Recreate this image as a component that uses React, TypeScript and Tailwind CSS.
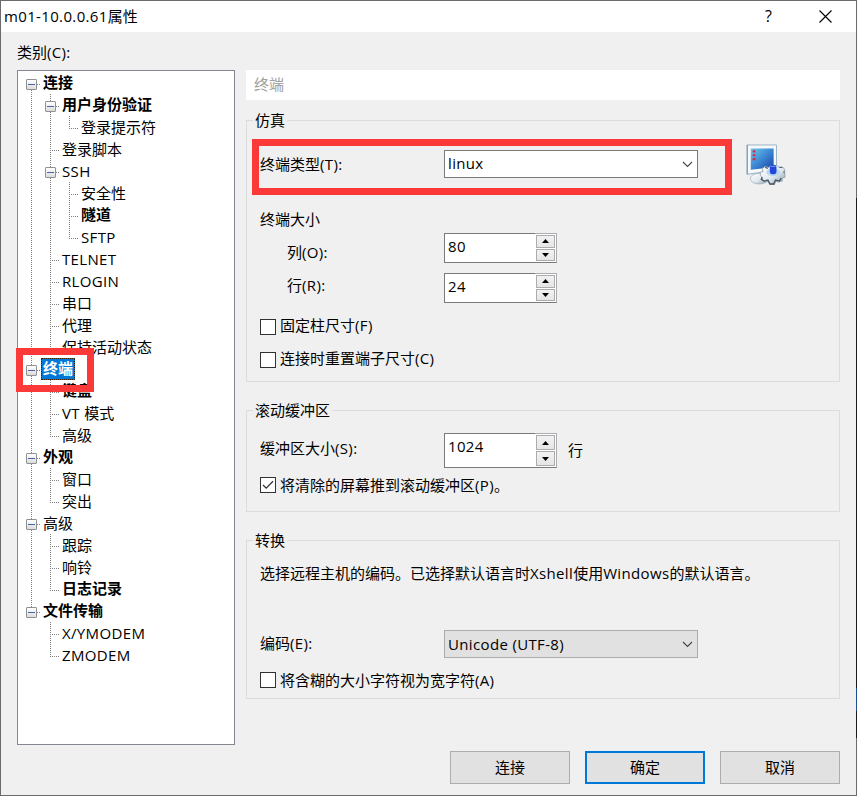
import clsx from "clsx";
import React from "react";

type Guide = "none" | "line" | "tee" | "corner";

interface TreeNode {
    label: string;
    bold?: boolean;
    selected?: boolean;
    children?: TreeNode[];
}

interface TreeRow {
    node: TreeNode;
    guides: Guide[];
    first: boolean;
}

const categories: TreeNode[] = [
    {
        label: "连接",
        bold: true,
        children: [
            { label: "用户身份验证", bold: true, children: [{ label: "登录提示符" }] },
            { label: "登录脚本" },
            {
                label: "SSH",
                children: [{ label: "安全性" }, { label: "隧道", bold: true }, { label: "SFTP" }],
            },
            { label: "TELNET" },
            { label: "RLOGIN" },
            { label: "串口" },
            { label: "代理" },
            { label: "保持活动状态" },
        ],
    },
    {
        label: "终端",
        bold: true,
        selected: true,
        children: [{ label: "键盘", bold: true }, { label: "VT 模式" }, { label: "高级" }],
    },
    { label: "外观", bold: true, children: [{ label: "窗口" }, { label: "突出" }] },
    {
        label: "高级",
        children: [{ label: "跟踪" }, { label: "响铃" }, { label: "日志记录", bold: true }],
    },
    { label: "文件传输", bold: true, children: [{ label: "X/YMODEM" }, { label: "ZMODEM" }] },
];

const flatten = (nodes: TreeNode[], parents: Guide[] = []): TreeRow[] =>
    nodes.flatMap((node, i) => {
        const last = i === nodes.length - 1;
        return [
            {
                node,
                guides: [...parents, last ? "corner" : "tee"] as Guide[],
                first: i === 0 && parents.length === 0,
            },
            ...flatten(node.children ?? [], [...parents, last ? "none" : "line"]),
        ];
    });

// Latin runs are set a little wider than the Chinese around them
const Text = ({ children }: { children: string }) => (
    <>
        {children.split(/([\x20-\x7e]+)/).map((part, i) =>
            i % 2 ? (
                <span key={i} className="whitespace-pre tracking-[0.35px]">
                    {part}
                </span>
            ) : (
                part
            )
        )}
    </>
);

const GuideCell = ({ guide, expandable, first }: { guide: Guide; expandable: boolean; first: boolean }) => (
    <span className="relative block h-[22px] w-[19px] shrink-0">
        {guide !== "none" && (
            <span
                className={clsx(
                    "absolute left-[9px] w-px bg-[repeating-linear-gradient(to_bottom,#808080_0_1px,transparent_1px_2px)]",
                    first ? "top-3" : "top-0",
                    guide === "corner" ? "h-3" : "bottom-0"
                )}
            />
        )}
        {(guide === "tee" || guide === "corner") && (
            <span className="absolute left-[9px] right-[1px] top-3 h-px bg-[repeating-linear-gradient(to_right,#808080_0_1px,transparent_1px_2px)]" />
        )}
        {expandable && (
            <span className="absolute left-1 top-[7px] flex h-[11px] w-[11px] items-center justify-center rounded-[1px] border border-[#919191] bg-linear-to-b from-white to-[#dcdcdc]">
                <span className="h-px w-[7px] bg-[#4b63a7]" />
            </span>
        )}
    </span>
);

const CategoryTree = () => (
    <div className="h-[675px] w-[218px] border border-[#828790] bg-white pl-1 pt-px">
        {flatten(categories).map(({ node, guides, first }, row) => (
            <div key={row} className="flex h-[22px]">
                {guides.map((guide, i) => (
                    <GuideCell
                        key={i}
                        guide={guide}
                        first={first}
                        expandable={!!node.children && i === guides.length - 1}
                    />
                ))}
                <span
                    className={clsx(
                        "relative px-0.5",
                        node.bold ? "font-bold leading-5" : "leading-[22px]",
                        node.selected && "bg-[#0078d7] text-white outline-1 -outline-offset-1 outline-dotted outline-[#402000]"
                    )}
                >
                    <Text>{node.label}</Text>
                    {node.selected && (
                        <span className="absolute -left-[25px] -top-[10px] z-10 h-11 w-[78px] border-[7px] border-[#fc3939]" />
                    )}
                </span>
            </div>
        ))}
    </div>
);

const Group = ({ title, className, children }: { title: string; className: string; children: React.ReactNode }) => (
    <section className={clsx("relative border border-[#dcdcdc] px-[13px]", className)}>
        <h2 className="absolute -top-[11px] left-1.5 bg-[#f0f0f0] px-0.5">{title}</h2>
        {children}
    </section>
);

const Select = ({ value, gray }: { value: string; gray?: boolean }) => (
    <div
        className={clsx(
            "flex h-7 w-[254px] items-center justify-between border pl-[3px] pr-1",
            gray ? "border-[#adadad] bg-[#e1e1e1]" : "border-[#7a7a7a] bg-white"
        )}
    >
        <span className={clsx(!gray && "-mt-0.5")}>
            <Text>{value}</Text>
        </span>
        <svg width="11" height="7" viewBox="0 0 11 7" fill="none" stroke="#444" strokeWidth="1.1">
            <path d="M1 1l4.5 4.5L10 1" />
        </svg>
    </div>
);

const SpinButton = ({ down }: { down?: boolean }) => (
    <span className="flex flex-1 items-center justify-center border border-[#acacac] bg-linear-to-b from-[#f2f2f2] to-[#e6e6e6]">
        <svg width="7" height="4" viewBox="0 0 7 4" className={clsx(down && "rotate-180")}>
            <path d="M3.5 0L7 4H0z" />
        </svg>
    </span>
);

const Spinner = ({ value, className }: { value: string; className: string }) => (
    <div className={clsx("flex w-[113px] bg-white", className)}>
        <span className="w-[91px] border border-r-0 border-[#7a7a7a] pl-[3px] pt-0.5">
            <Text>{value}</Text>
        </span>
        <span className="flex flex-1 flex-col gap-px border border-l-0 border-[#abadb3] border-b-[#7a7a7a] py-px pl-px pr-px">
            <SpinButton />
            <SpinButton down />
        </span>
    </div>
);

const Checkbox = ({ label, checked, className }: { label: string; checked?: boolean; className?: string }) => (
    <label className={clsx("flex h-4 items-center gap-1", className)}>
        <span className="flex h-4 w-4 items-center justify-center border border-[#333] bg-white">
            {checked && (
                <svg width="12" height="10" viewBox="0 0 12 10" fill="none" stroke="#333" strokeWidth="1.3">
                    <path d="M1 5l3.2 3.2L11 1.3" />
                </svg>
            )}
        </span>
        <span className="whitespace-nowrap">
            <Text>{label}</Text>
        </span>
    </label>
);

const TerminalIcon = () => (
    <svg width="40" height="41" viewBox="0 0 42 42" preserveAspectRatio="none">
        <defs>
            <linearGradient id="screen" x1="0" y1="0" x2="1" y2="1">
                <stop offset="0" stopColor="#70c8ec" />
                <stop offset="0.5" stopColor="#3b86d2" />
                <stop offset="1" stopColor="#1740a8" />
            </linearGradient>
            <linearGradient id="metal" x1="0" y1="0" x2="1" y2="1">
                <stop offset="0" stopColor="#fff" />
                <stop offset="0.55" stopColor="#dfe8ee" />
                <stop offset="1" stopColor="#7e929f" />
            </linearGradient>
        </defs>
        <ellipse cx="14" cy="35.5" rx="9.5" ry="5.5" fill="url(#metal)" stroke="#a0b3bf" strokeWidth="0.8" />
        <path d="M1 1h31v26L1 31z" fill="#f5f9fb" stroke="#9aafbf" />
        <path d="M1.5 1v30" stroke="#8299ad" />
        <path d="M5 4.5h24v19L5 26.5z" fill="url(#screen)" />
        <path d="M7 7.5h3M7 11.5h3M7 15.5h3" stroke="#d92b3f" strokeWidth="2.2" />
        <path
            d="M17 25l3-2 4 1 2-2h6l3 2 4 0 2 3-1 2 1 2v3l-3 1v3l-4 1-3-1-1 4h-4l-2-4-3 1-4-2v-3l-2-2v-3l3-1z"
            fill="url(#metal)"
            stroke="#8a9ba7"
            strokeWidth="0.8"
        />
        <path d="M17 34l-1 2 3 2 4-1 2 4h4l2-4 4 1 2-3" fill="none" stroke="#465763" strokeWidth="1.4" />
        <path d="M20 24l3 1M35 24l3 0M40 28v2" stroke="#536673" strokeWidth="1.2" />
        <ellipse cx="28.5" cy="29" rx="7" ry="4" fill="#b8d7ef" />
        <rect x="25" y="21.5" width="7" height="9.5" rx="2.5" fill="#2346dc" />
        <path d="M26 23h5" stroke="#7098f2" />
    </svg>
);

const DialogButton = ({ label, primary }: { label: string; primary?: boolean }) => (
    <button
        className={clsx(
            "h-[33px] w-[120px] bg-[#e1e1e1] pb-0.5",
            primary ? "border-2 border-[#0078d7]" : "border border-[#adadad]"
        )}
    >
        {label}
    </button>
);

export default function App() {
    return (
        <div className="relative flex h-[796px] w-[857px] flex-col border border-[#6b6b6e] bg-[#f0f0f0] font-['Open_Sans','Noto_Sans_CJK_SC',sans-serif] text-[15px] leading-5 text-black">
            <header className="flex h-[31px] items-center bg-white pl-[3px]">
                <h1 className="flex-1 pb-0.5">
                    <Text>m01-10.0.0.61属性</Text>
                </h1>
                <span className="mr-[47px] pb-px text-base">?</span>
                <svg width="13" height="13" viewBox="0 0 13 13" className="mr-[24px]" stroke="#000" strokeWidth="1.1">
                    <path d="M.5.5l12 12M12.5.5l-12 12" />
                </svg>
            </header>

            <div className="flex gap-[11px] pl-4 pt-2.5">
                <aside>
                    <p className="mb-2">
                        <Text>类别(C):</Text>
                    </p>
                    <CategoryTree />
                </aside>

                <main className="w-[594px] pt-7">
                    <div className="flex h-[30px] items-center bg-white pb-0.5 pl-2 text-[#a0a0a0]">终端</div>

                    <Group title="仿真" className="mt-5 h-[262px] pt-[29px]">
                        <div className="relative flex h-7 items-center">
                            <span className="w-[184px]">
                                <Text>终端类型(T):</Text>
                            </span>
                            <Select value="linux" />
                            <span className="absolute -left-2 -top-[11px] h-14 w-[480px] border-[7px] border-[#fc3939]" />
                            <span className="ml-12 mt-px">
                                <TerminalIcon />
                            </span>
                        </div>
                        <p className="mt-[31px]">终端大小</p>
                        <div className="mt-1 flex">
                            <div className="flex w-[184px] flex-col gap-[13px] pl-[27px] pt-[9px]">
                                <span>
                                    <Text>列(O):</Text>
                                </span>
                                <span>
                                    <Text>行(R):</Text>
                                </span>
                            </div>
                            <div className="flex flex-col gap-2.5">
                                <Spinner value="80" className="h-[30px]" />
                                <Spinner value="24" className="h-[30px]" />
                            </div>
                        </div>
                        <Checkbox label="固定柱尺寸(F)" className="mt-4 [&>span:last-child]:-mt-1" />
                        <Checkbox label="连接时重置端子尺寸(C)" className="mt-[17px] [&>span:last-child]:-mt-1" />
                    </Group>

                    <Group title="滚动缓冲区" className="mt-7 h-[102px] pt-[22px]">
                        <div className="flex h-[35px] items-center">
                            <span className="w-[184px] pb-1.5">
                                <Text>缓冲区大小(S):</Text>
                            </span>
                            <Spinner value="1024" className="h-[35px]" />
                            <span className="ml-[11px] pb-0.5">行</span>
                        </div>
                        <Checkbox label="将清除的屏幕推到滚动缓冲区(P)。" checked className="mt-[9px]" />
                    </Group>

                    <Group title="转换" className="mt-7 h-[159px] pt-[22px]">
                        <p className="whitespace-nowrap">
                            <Text>选择远程主机的编码。已选择默认语言时Xshell使用Windows的默认语言。</Text>
                        </p>
                        <div className="mt-[47px] flex items-center">
                            <span className="w-[184px] pb-0.5">
                                <Text>编码(E):</Text>
                            </span>
                            <Select value="Unicode (UTF-8)" gray />
                        </div>
                        <Checkbox label="将含糊的大小字符视为宽字符(A)" className="mt-3.5" />
                    </Group>

                    <footer className="mt-[52px] flex justify-end gap-[15px]">
                        <DialogButton label="连接" />
                        <DialogButton label="确定" primary />
                        <DialogButton label="取消" />
                    </footer>
                </main>
            </div>

            {/* darker stretch of the window edge */}
            <span className="absolute -right-px top-[197px] h-[540px] w-px bg-[linear-gradient(to_bottom,#1a1a1a_490px,#1c4f93_490px_513px,#1a1a1a_513px)]" />
        </div>
    );
}
